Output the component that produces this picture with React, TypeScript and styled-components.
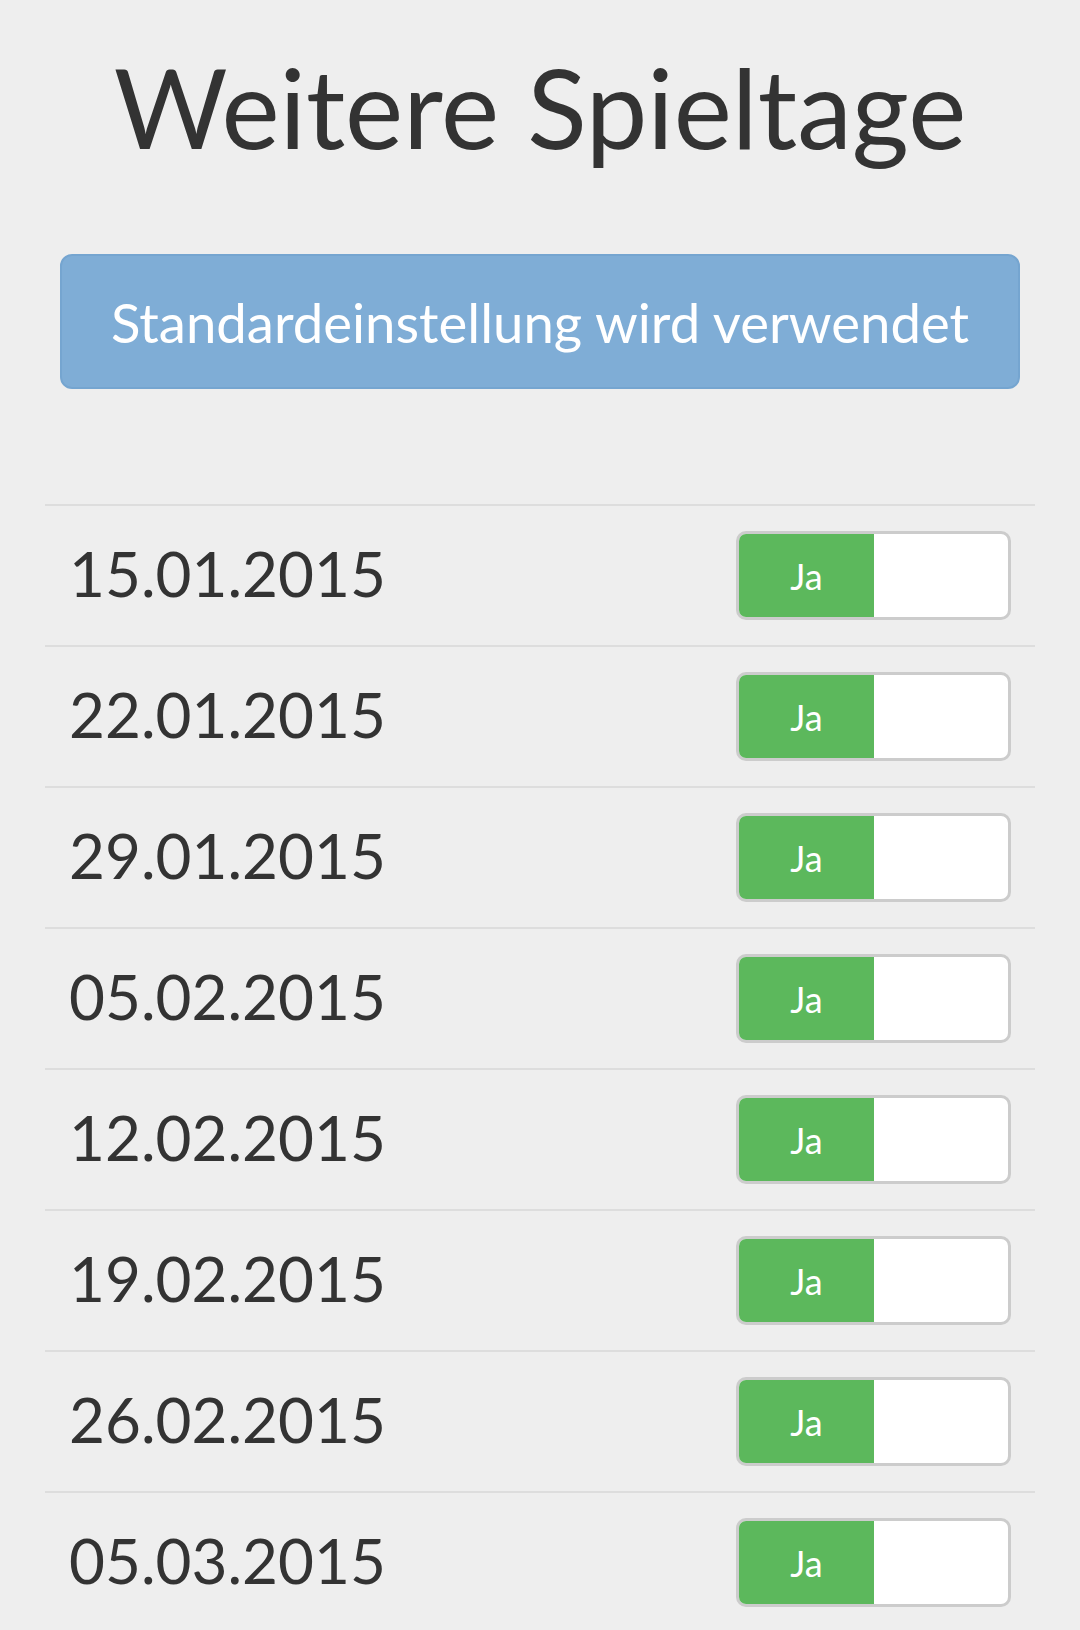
import React from "react";
import styled, { createGlobalStyle } from "styled-components";

const GlobalStyle = createGlobalStyle`
  html, body {
    margin: 0;
    padding: 0;
    background: #eeeeee;
  }
  body {
    font-family: Lato, "Open Sans", "Liberation Sans", sans-serif;
    color: #333333;
  }
`;

const Page = styled.div`
  padding: 0 45px;
  min-height: 1630px;
  box-sizing: border-box;
`;

const Title = styled.h1`
  margin: 46px 0 0;
  font-size: 110px;
  line-height: 121px;
  font-weight: 400;
  text-align: center;
  color: #333333;
`;

const DefaultButton = styled.div`
  margin: 87px 15px 0;
  height: 135px;
  box-sizing: border-box;
  display: flex;
  align-items: center;
  justify-content: center;
  background: #7fadd6;
  border: 2px solid #75a5d0;
  border-radius: 12px;
  color: #ffffff;
  font-size: 54.5px;
  font-weight: 400;
`;

const List = styled.div`
  margin-top: 115px;
  display: flex;
  flex-direction: column;
`;

const Row = styled.div`
  height: 141px;
  box-sizing: border-box;
  border-top: 2px solid #dddddd;
  display: flex;
  align-items: center;
  justify-content: space-between;
  padding: 0 24px 0 24px;
`;

const DateText = styled.span`
  font-size: 62px;
  line-height: 1;
  margin-bottom: 5px;
  color: #333333;
`;

const Switch = styled.div`
  width: 275px;
  height: 89px;
  box-sizing: border-box;
  border: 3px solid #cccccc;
  border-radius: 10px;
  background: #ffffff;
  overflow: hidden;
  display: flex;
`;

const SwitchOn = styled.div`
  width: 135px;
  background: #5cb85c;
  color: #ffffff;
  display: flex;
  align-items: center;
  justify-content: center;
  font-size: 36px;
`;

const dates = [
  "15.01.2015",
  "22.01.2015",
  "29.01.2015",
  "05.02.2015",
  "12.02.2015",
  "19.02.2015",
  "26.02.2015",
  "05.03.2015",
];

export default function App() {
  return (
    <>
      <GlobalStyle />
      <Page>
        <Title>Weitere Spieltage</Title>
        <DefaultButton>Standardeinstellung wird verwendet</DefaultButton>
        <List>
          {dates.map((d) => (
            <Row key={d}>
              <DateText>{d}</DateText>
              <Switch>
                <SwitchOn>Ja</SwitchOn>
              </Switch>
            </Row>
          ))}
        </List>
      </Page>
    </>
  );
}
